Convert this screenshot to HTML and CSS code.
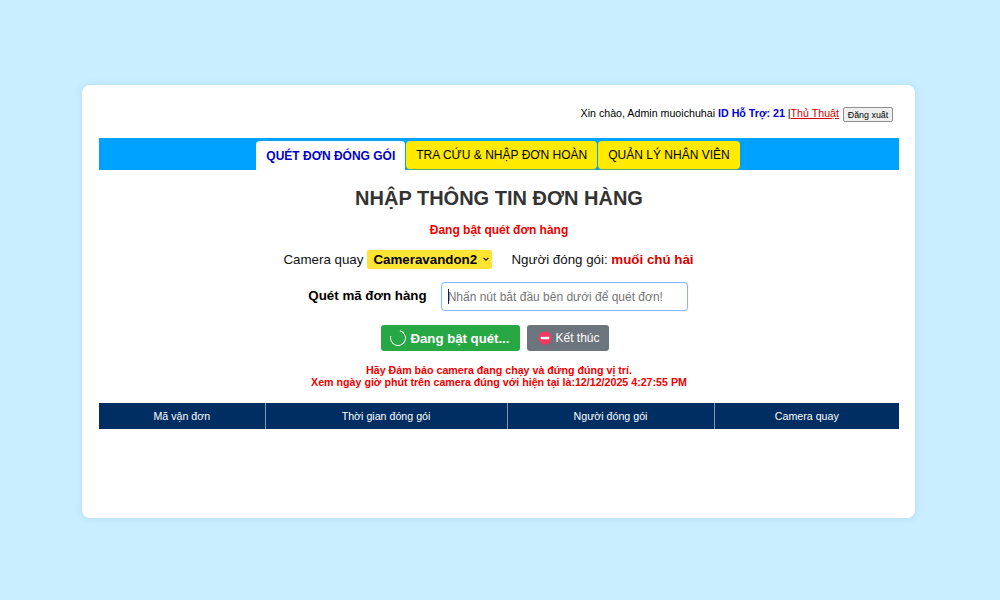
FILE: index.html
```html
<!DOCTYPE html>
<html lang="vi">
<head>
<meta charset="utf-8">
<title>Nhập thông tin đơn hàng</title>
<link rel="stylesheet" href="styles.css">
</head>
<body>
<main class="card">
  <div class="userbar">
    <span>Xin chào, Admin muoichuhai</span>
    <b class="support">ID Hỗ Trợ: 21</b>
    <span class="sep">|<a class="tips" href="#">Thủ Thuật</a></span>
    <button class="logout" type="button">Đăng xuất</button>
  </div>
  <nav class="tabs">
    <a class="tab active" href="#">QUÉT ĐƠN ĐÓNG GÓI</a>
    <a class="tab" href="#">TRA CỨU &amp; NHẬP ĐƠN HOÀN</a>
    <a class="tab" href="#">QUẢN LÝ NHÂN VIÊN</a>
  </nav>
  <h1 class="title">NHẬP THÔNG TIN ĐƠN HÀNG</h1>
  <p class="status">Đang bật quét đơn hàng</p>
  <div class="camera-row">
    <span>Camera quay</span>
    <span class="select">Cameravandon2
      <svg class="chev" viewBox="0 0 10 10" width="8" height="8"><path d="M2 3.5 5 6.5 8 3.5" fill="none" stroke="#111" stroke-width="1.5"/></svg>
    </span>
    <span class="packer">Người đóng gói: <b class="packer-name">muối chú hải</b></span>
  </div>
  <div class="scan-row">
    <label class="scan-label" for="scan">Quét mã đơn hàng</label>
    <div class="scan-input">
      <span class="caret"></span>
      <input id="scan" class="input" type="text" placeholder="Nhấn nút bắt đầu bên dưới để quét đơn!">
    </div>
  </div>
  <div class="actions">
    <button class="btn btn-start" type="button"><span class="spinner"></span>Đang bật quét...</button>
    <button class="btn btn-stop" type="button">
      <svg viewBox="0 0 16 16" width="14" height="14"><circle cx="8" cy="8" r="7.5" fill="#f2385f"/><rect x="3.2" y="6.5" width="9.6" height="3" rx=".5" fill="#fff"/></svg>
      Kết thúc
    </button>
  </div>
  <p class="notice">Hãy Đảm bảo camera đang chạy và đứng đúng vị trí.<br>Xem ngày giờ phút trên camera đúng với hiện tại là:12/12/2025 4:27:55 PM</p>
  <table class="orders">
    <thead>
      <tr>
        <th class="c1">Mã vận đơn</th>
        <th class="c2">Thời gian đóng gói</th>
        <th class="c3">Người đóng gói</th>
        <th class="c4">Camera quay</th>
      </tr>
    </thead>
  </table>
</main>
</body>
</html>
```
FILE: styles.css
```css
* { box-sizing: border-box; }
html, body { height: 100%; }
body {
  margin: 0;
  background: #c8eeff;
  font-family: "Liberation Sans", Arial, sans-serif;
  color: #000;
  display: flex;
  align-items: flex-start;
  justify-content: center;
  padding: 85px 85px 0 82px;
}
.card {
  width: 833px;
  height: 433px;
  background: #fff;
  border-radius: 8px;
  box-shadow: 0 0 6px rgba(120, 170, 200, .25);
  padding: 21px 16px 0 17px;
  display: flex;
  flex-direction: column;
}
.userbar {
  height: 32px;
  display: flex;
  justify-content: flex-end;
  align-items: flex-start;
  padding-right: 6px;
  font-size: 10.67px;
  line-height: 15px;
  white-space: pre;
}
.userbar .support { color: #0000d6; margin-left: 3px; }
.sep { margin-left: 3px; }
.tips { color: #d40000; }
.logout {
  margin: 1px 0 0 4px;
  height: 15px;
  width: 50px;
  padding: 0;
  font: 8.9px "Liberation Sans", Arial, sans-serif;
  color: #000;
  background: #efefef;
  border: 1px solid #8f8f8f;
  border-radius: 2px;
}
.tabs {
  height: 32px;
  background: #00a2ff;
  display: flex;
  justify-content: center;
  align-items: flex-start;
  gap: 1px;
  padding: 3px 2px 0 0;
}
.tab {
  height: 28px;
  padding: 0 10px;
  display: flex;
  align-items: center;
  font-size: 12px;
  color: #000;
  text-decoration: none;
  background: #ffea00;
  border-radius: 4px;
  box-shadow: 0 1px 0 #5fa868;
}
.tab.active {
  height: 29px;
  background: #fff;
  color: #0000c8;
  font-weight: 700;
  border-radius: 4px 4px 0 0;
  box-shadow: none;
}
.title {
  margin: 16px 0 0;
  font-size: 20px;
  line-height: 24px;
  text-align: center;
  color: #333;
  font-weight: 700;
}
.status {
  margin: 12px 0 0;
  text-align: center;
  font-size: 12px;
  line-height: 16px;
  font-weight: 700;
  color: #f00000;
}
.camera-row {
  margin-top: 11px;
  height: 20px;
  display: flex;
  justify-content: center;
  align-items: center;
  font-size: 13.33px;
  padding-right: 21px;
  color: #111;
}
.select {
  margin-left: 4px;
  width: 125px;
  height: 19px;
  background: #ffe433;
  border-radius: 2px;
  font-weight: 700;
  font-size: 13.33px;
  display: flex;
  align-items: center;
  justify-content: space-between;
  padding: 0 2px 0 6px;
  color: #000;
}
.packer { margin-left: 19px; }
.packer-name { color: #dc0000; }
.scan-row {
  margin-top: 13px;
  height: 29px;
  display: flex;
  justify-content: center;
  align-items: center;
  gap: 14px;
  padding-right: 2px;
}
.scan-label {
  font-size: 13.33px;
  font-weight: 700;
  padding-bottom: 2px;
}
.scan-input {
  position: relative;
  width: 247px;
  height: 29px;
}
.caret {
  position: absolute;
  left: 7px;
  top: 7px;
  width: 1px;
  height: 15px;
  background: #222;
}
.input {
  width: 100%;
  height: 100%;
  padding: 0 6px;
  font: 12px "Liberation Sans", Arial, sans-serif;
  border: 1px solid #86b7fe;
  border-radius: 4px;
  box-shadow: 0 0 1px rgba(13, 110, 253, .3);
  outline: none;
}
.input::placeholder { color: #757575; }
.actions {
  margin-top: 14px;
  height: 26px;
  display: flex;
  justify-content: center;
  gap: 7px;
  padding-right: 9px;
}
.btn {
  height: 26px;
  border: 0;
  border-radius: 3px;
  color: #fff;
  display: flex;
  align-items: center;
  font-family: "Liberation Sans", Arial, sans-serif;
  padding: 0;
}
.btn-start {
  width: 139px;
  background: #28a745;
  font-size: 13.2px;
  font-weight: 700;
  padding-left: 9px;
  gap: 5px;
}
.spinner {
  width: 16px;
  height: 16px;
  border: 1.4px solid #fff;
  border-top-color: transparent;
  border-radius: 50%;
  transform: rotate(-30deg);
}
.btn-stop {
  width: 82px;
  background: #6c757d;
  font-size: 12px;
  padding-left: 11px;
  gap: 4px;
}
.notice {
  margin: 13px 0 0;
  text-align: center;
  font-size: 10.67px;
  line-height: 12px;
  font-weight: 700;
  color: #f00000;
}
.orders {
  margin-top: 15px;
  width: 800px;
  border-collapse: collapse;
  table-layout: fixed;
}
.orders th {
  height: 26px;
  padding: 0;
  background: #002d62;
  color: #fff;
  font-size: 10.67px;
  font-weight: 400;
  border-left: 1px solid #7f96b0;
}
.orders th:first-child { border-left: 0; }
.c1 { width: 166px; }
.c2 { width: 242px; }
.c3 { width: 207px; }
.c4 { width: 185px; }
```
